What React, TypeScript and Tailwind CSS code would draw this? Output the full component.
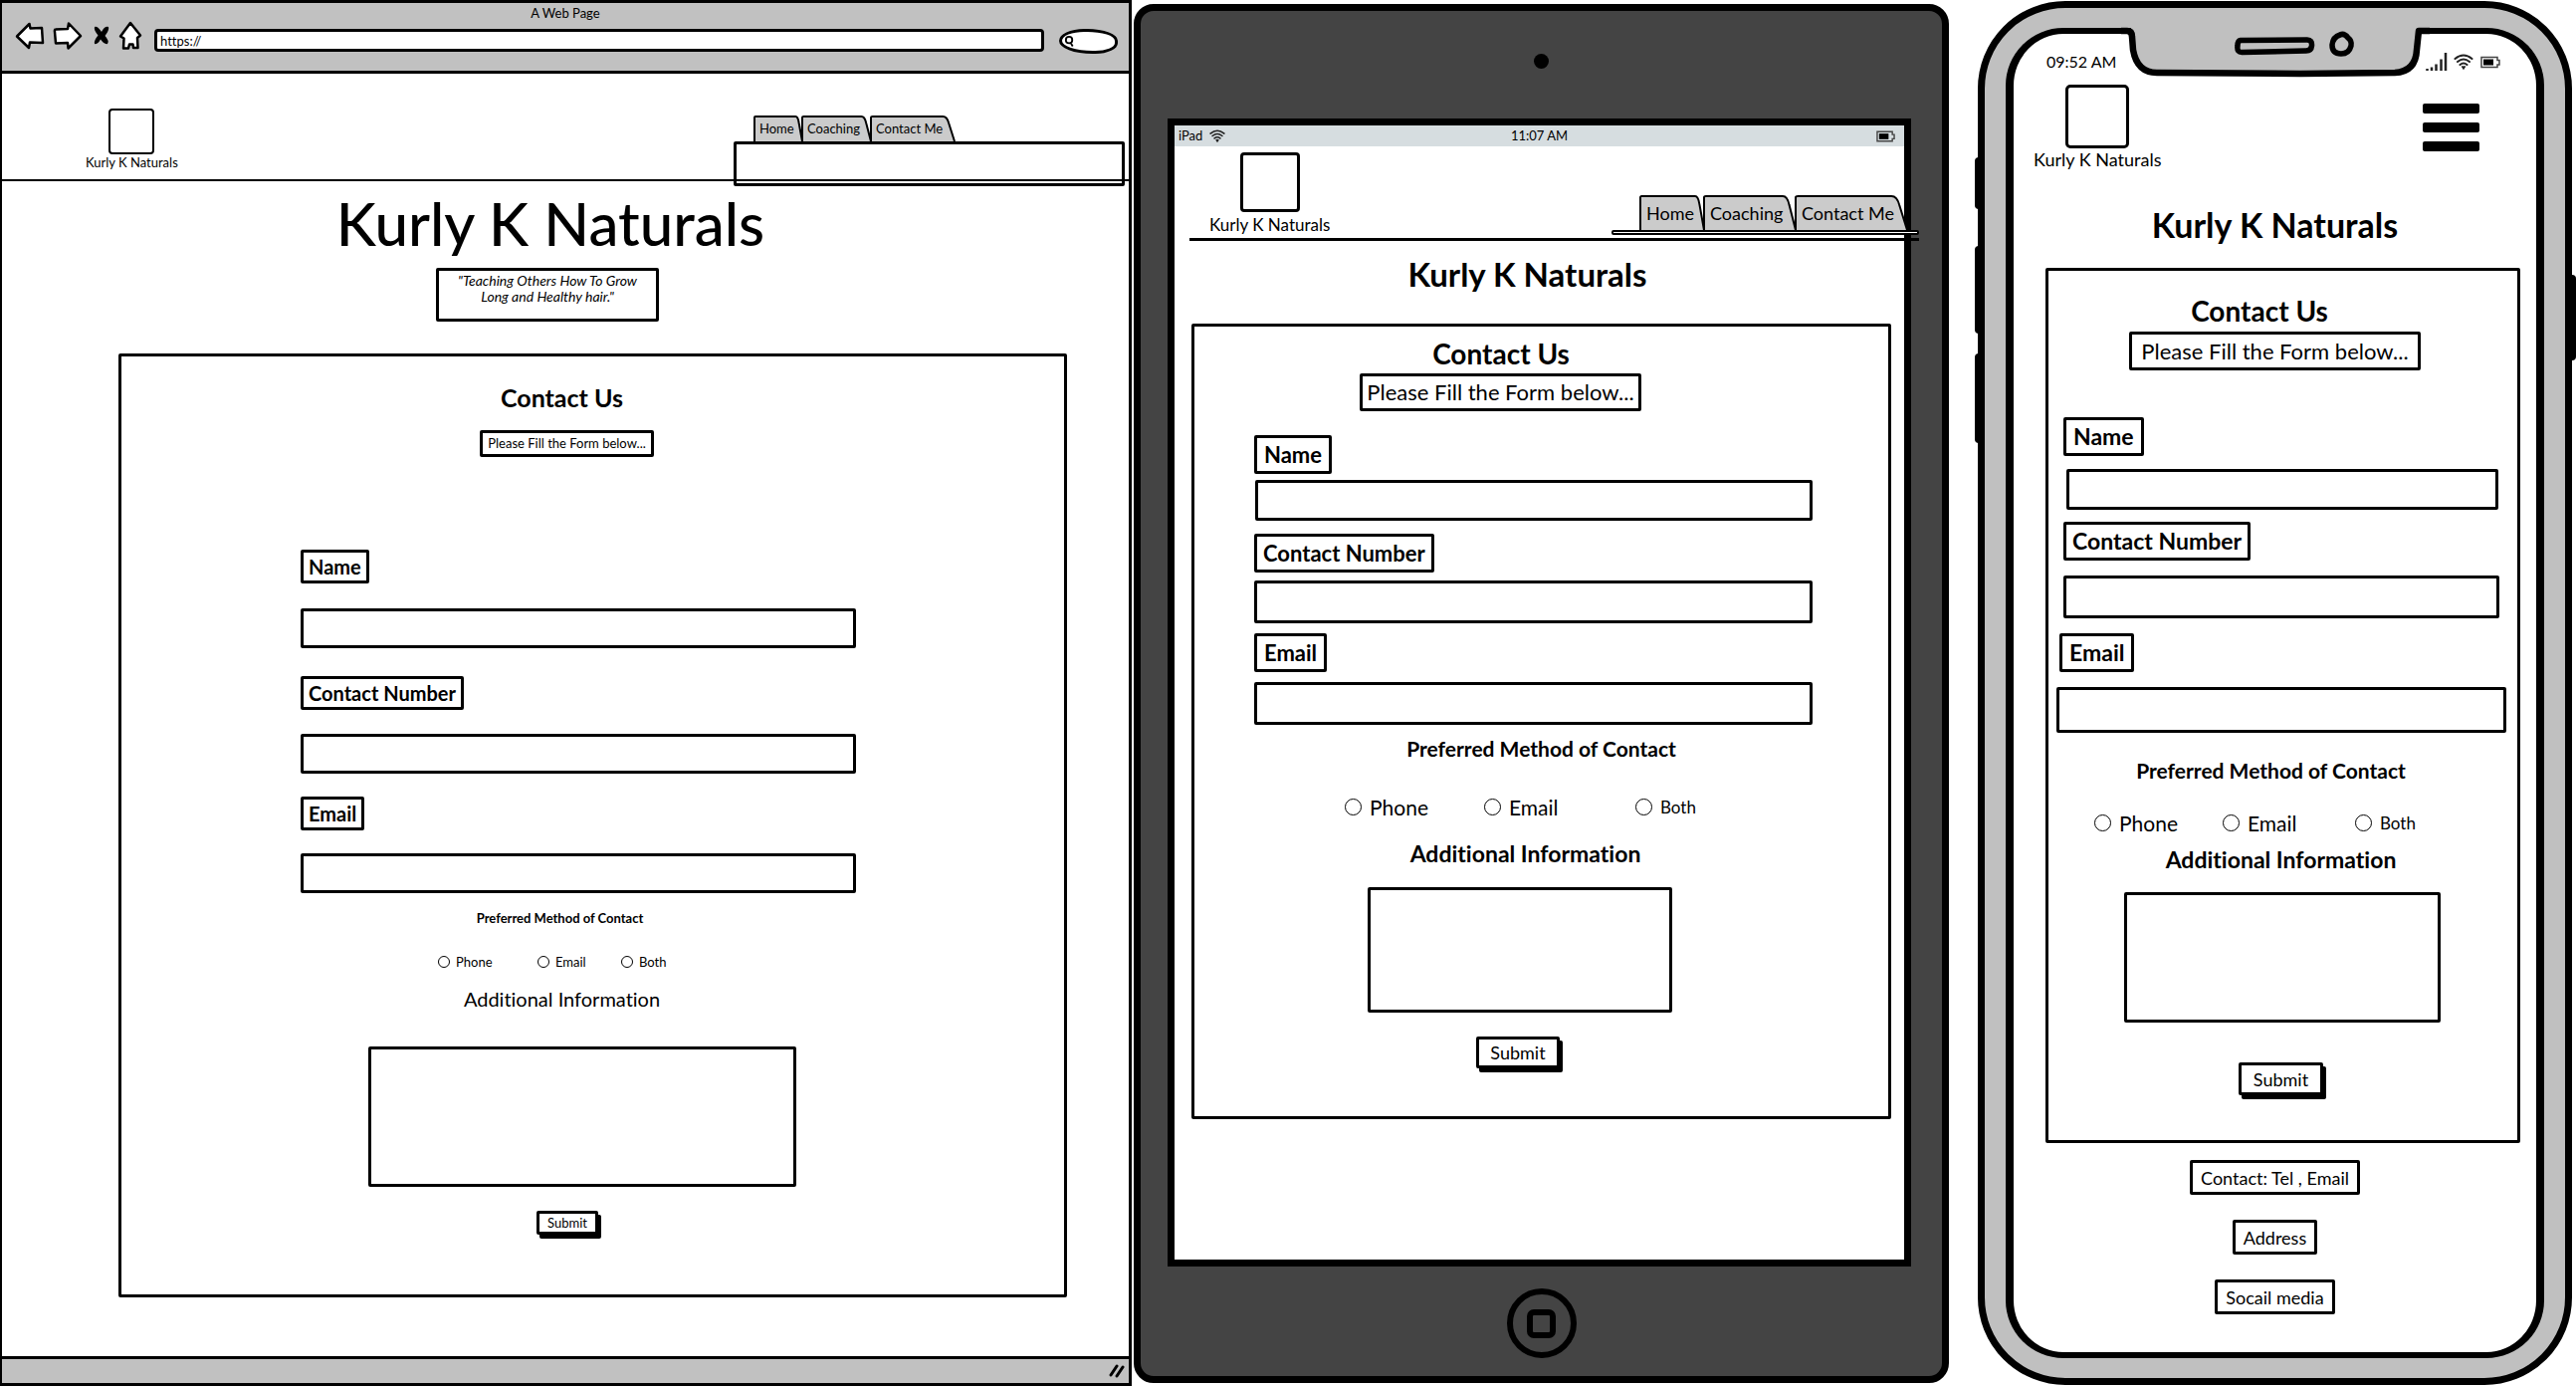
import type { ReactNode } from "react";

type FieldSpec = { label: string; type: string; labelBox: string; input: string };

type FormSpec = {
  id: string;
  card: string;
  heading: string;
  hint: string;
  fields: FieldSpec[];
  preferred: string;
  radios: string;
  options: { label: string; box: string; text: string }[];
  radio: string;
  additional: string;
  textarea: string;
  submit: string;
};

const desktopForm: FormSpec = {
  id: "desktop",
  card: "ml-[117px] mr-[62px] mt-[32px] border-[3px] pb-[60px]",
  heading: "mt-[29px] h-6 pr-[62px] text-[25px]",
  hint: "mt-[21px] mr-[52px] h-[27px] w-[175px] text-[13px]",
  fields: [
    {
      label: "Name",
      type: "text",
      labelBox: "mt-[93px] ml-[180px] h-[34px] px-[5px] text-[20px]",
      input: "mt-[25px] ml-[180px] mr-[209px] h-10",
    },
    {
      label: "Contact Number",
      type: "tel",
      labelBox: "mt-[28px] ml-[180px] h-[34px] px-[5px] text-[20px]",
      input: "mt-[24px] ml-[180px] mr-[209px] h-10",
    },
    {
      label: "Email",
      type: "email",
      labelBox: "mt-[23px] ml-[180px] h-[34px] px-[5px] text-[20px]",
      input: "mt-[23px] ml-[180px] mr-[209px] h-10",
    },
  ],
  preferred: "mt-[17px] h-4 pr-[66px] text-[13px]",
  radios: "mt-[28px] ml-[318px] h-4",
  options: [
    { label: "Phone", box: "w-[100px] gap-1.5", text: "text-[13px]" },
    { label: "Email", box: "w-[84px] gap-1.5", text: "text-[13px]" },
    { label: "Both", box: "gap-1.5", text: "text-[13px]" },
  ],
  radio: "size-3",
  additional: "mt-[17px] h-6 pr-[62px] text-[20px] font-normal",
  textarea: "mt-[36px] ml-[248px] mr-[269px] h-[141px]",
  submit: "mt-[24px] mr-[51px] h-6 px-2 text-[13px]",
};

const tabletForm: FormSpec = {
  id: "tablet",
  card: "ml-[17px] mr-[13px] mt-[34px] border-[3px] pb-[48px]",
  heading: "mt-[15px] h-6 pr-[81px] text-[28px]",
  hint: "mt-[8px] mr-[82px] h-[38px] w-[283px] text-[22px]",
  fields: [
    {
      label: "Name",
      type: "text",
      labelBox: "mt-[24px] ml-[60px] h-[39px] px-[7px] text-[22px]",
      input: "mt-[6px] ml-[61px] mr-[76px] h-[41px]",
    },
    {
      label: "Contact Number",
      type: "tel",
      labelBox: "mt-[13px] ml-[60px] h-[39px] px-[6px] text-[22px]",
      input: "mt-[8px] ml-[60px] mr-[76px] h-[43px]",
    },
    {
      label: "Email",
      type: "email",
      labelBox: "mt-[10px] ml-[60px] h-[39px] px-[7px] text-[22px]",
      input: "mt-[10px] ml-[60px] mr-[76px] h-[43px]",
    },
  ],
  preferred: "mt-[13px] h-5 text-[21px]",
  radios: "mt-[39px] ml-[151px] h-5",
  options: [
    { label: "Phone", box: "w-[140px] gap-2", text: "text-[21px]" },
    { label: "Email", box: "w-[152px] gap-2", text: "text-[21px]" },
    { label: "Both", box: "gap-2", text: "text-[17px]" },
  ],
  radio: "size-[17px]",
  additional: "mt-[25px] h-6 pr-[32px] text-[23px] font-bold",
  textarea: "mt-[22px] ml-[174px] mr-[217px] h-[126px]",
  submit: "mt-[24px] mr-[47px] h-8 px-[11px] text-[18px]",
};

const phoneForm: FormSpec = {
  id: "phone",
  card: "ml-[32px] mr-[16px] mt-[27px] border-[3px] pb-[45px]",
  heading: "mt-[28px] h-6 pr-[47px] text-[28px]",
  hint: "mt-[9px] mr-[16px] h-[39px] w-[293px] text-[22px]",
  fields: [
    {
      label: "Name",
      type: "text",
      labelBox: "mt-[47px] ml-[15px] h-[39px] px-[7px] text-[23px]",
      input: "mt-[13px] ml-[18px] mr-[19px] h-[41px]",
    },
    {
      label: "Contact Number",
      type: "tel",
      labelBox: "mt-[12px] ml-[15px] h-[39px] px-[6px] text-[23px]",
      input: "mt-[15px] ml-[15px] mr-[18px] h-[43px]",
    },
    {
      label: "Email",
      type: "email",
      labelBox: "mt-[15px] ml-[11px] h-[39px] px-[7px] text-[23px]",
      input: "mt-[15px] ml-[8px] mr-[11px] h-[46px]",
    },
  ],
  preferred: "mt-[27px] h-5 pr-[24px] text-[21px]",
  radios: "mt-[33px] ml-[46px] h-5",
  options: [
    { label: "Phone", box: "w-[129px] gap-2", text: "text-[21px]" },
    { label: "Email", box: "w-[133px] gap-2", text: "text-[21px]" },
    { label: "Both", box: "gap-2", text: "text-[17px]" },
  ],
  radio: "size-[17px]",
  additional: "mt-[15px] h-6 pr-[4px] text-[23px] font-bold",
  textarea: "mt-[21px] ml-[76px] mr-[77px] h-[131px]",
  submit: "mt-[40px] mr-[4px] h-[33px] px-[12px] text-[18px]",
};

function ContactForm({ spec }: { spec: FormSpec }) {
  return (
    <form
      onSubmit={(e) => e.preventDefault()}
      className={`flex flex-col rounded-[2px] border-black ${spec.card}`}
    >
      <h2 className={`text-center leading-6 font-bold ${spec.heading}`}>Contact Us</h2>
      <p
        className={`flex items-center justify-center self-center rounded-[2px] border-[3px] border-black leading-none whitespace-nowrap ${spec.hint}`}
      >
        Please Fill the Form below...
      </p>
      {spec.fields.map((f) => {
        const id = `${spec.id}-${f.type}`;
        return (
          <div key={id} className="flex flex-col">
            <label
              htmlFor={id}
              className={`flex items-center self-start rounded-[2px] border-[3px] border-black leading-none font-bold whitespace-nowrap ${f.labelBox}`}
            >
              {f.label}
            </label>
            <input id={id} type={f.type} className={`rounded-[2px] border-[3px] border-black px-2 ${f.input}`} />
          </div>
        );
      })}
      <fieldset className="flex flex-col">
        <legend className="contents">
          <span className={`flex items-center justify-center leading-none font-bold ${spec.preferred}`}>
            Preferred Method of Contact
          </span>
        </legend>
        <div className={`flex ${spec.radios}`}>
          {spec.options.map((o) => (
            <label key={o.label} className={`flex items-center leading-none ${o.box}`}>
              <input
                type="radio"
                name={`${spec.id}-method`}
                className={`shrink-0 appearance-none rounded-full border border-black checked:bg-black ${spec.radio}`}
              />
              <span className={o.text}>{o.label}</span>
            </label>
          ))}
        </div>
      </fieldset>
      <label htmlFor={`${spec.id}-info`} className={`text-center leading-6 ${spec.additional}`}>
        Additional Information
      </label>
      <textarea
        id={`${spec.id}-info`}
        className={`resize-none rounded-[2px] border-[3px] border-black p-2 ${spec.textarea}`}
      />
      <button
        type="submit"
        className={`flex items-center self-center rounded-[2px] border-[3px] border-black bg-white leading-none shadow-[3px_4px_0_0_#000] ${spec.submit}`}
      >
        Submit
      </button>
    </form>
  );
}

function Tab({ children, className }: { children: ReactNode; className: string }) {
  return (
    <a href="#" className={`relative flex items-center leading-none whitespace-nowrap ${className}`}>
      <svg
        className="absolute inset-0 h-full w-full overflow-visible"
        viewBox="0 0 100 100"
        preserveAspectRatio="none"
        aria-hidden="true"
      >
        <path
          d="M0 100V4Q0 0 2 0H86Q91 0 93 26L100 100"
          fill="#cbcbcb"
          stroke="#000"
          strokeWidth="2"
          vectorEffect="non-scaling-stroke"
        />
      </svg>
      <span className="relative">{children}</span>
    </a>
  );
}

function BackIcon() {
  return (
    <svg viewBox="0 0 30 30" className="h-[30px] w-[30px]" fill="#fff" stroke="#000" strokeWidth="2.5" strokeLinejoin="round">
      <path d="M2 15.5 14.5 3 15.5 7.5 27 7 28 22 15 21.5 14 27Z" />
    </svg>
  );
}

function ForwardIcon() {
  return (
    <svg viewBox="0 0 30 30" className="h-[30px] w-[30px]" fill="#fff" stroke="#000" strokeWidth="2.5" strokeLinejoin="round">
      <path d="M28 15 16 2.500 15 8 3 8.500Q1.500 8.500 2 11L3 22.500 15 22 15.500 27.500Z" />
    </svg>
  );
}

function StopIcon() {
  return (
    <svg viewBox="0 0 18 22" className="h-[22px] w-[18px]" aria-hidden="true">
      <path d="M2 2Q5 1 9 7Q12 1 16 2Q17 5 12.500 11Q17 16 15 19Q12 20 8 14.500Q5 20 2 19Q1 16 5.500 10.500Q1 5 2 2Z" />
    </svg>
  );
}

function HomeIcon() {
  return (
    <svg viewBox="0 0 24 30" className="h-[30px] w-6" fill="#fff" stroke="#000" strokeWidth="2.5" strokeLinejoin="round">
      <path d="M12 2 22 14.500 19 17 19.500 27H15L14.500 23.500 11 23.500 10 27.500H5L5.500 17.500 2 15.500Z" />
    </svg>
  );
}

function WifiIcon({ className }: { className: string }) {
  return (
    <svg viewBox="0 0 20 16" className={className} fill="none" stroke="#222" strokeWidth="2" strokeLinecap="round">
      <path d="M1.500 5Q10-2 18.500 5M4 8Q10 3 16 8M6.500 11Q10 8 13.500 11" />
      <path d="M9 13 10 14.500 11 13" />
    </svg>
  );
}

function BatteryIcon({ className }: { className: string }) {
  return (
    <svg viewBox="0 0 20 12" className={className} aria-hidden="true">
      <path d="M1 1H17V4H19V8.500H17V11H1Z" fill="none" stroke="#444" strokeWidth="1.5" />
      <path d="M3 3H13V9H3Z" fill="#000" />
    </svg>
  );
}

function SignalIcon() {
  return (
    <svg viewBox="0 0 22 18" className="h-[18px] w-[22px]" stroke="#222" strokeWidth="2.5" aria-hidden="true">
      <path d="M1.500 18V16M6 18V14.500M10.500 18V11.500M15.500 18V6.500M20 18V0" />
    </svg>
  );
}

function DesktopFrame() {
  return (
    <section className="flex flex-col border-[3px] border-l-2 border-black bg-white">
      <header className="flex h-[71px] flex-col border-b-[3px] border-black bg-[#c1c1c1]">
        <p className="mt-0.5 text-center text-[13px] leading-4">A Web Page</p>
        <div className="flex items-start pr-[11px] pl-[13px]">
          <button type="button" aria-label="Back"><BackIcon /></button>
          <button type="button" aria-label="Forward" className="ml-2"><ForwardIcon /></button>
          <button type="button" aria-label="Stop" className="mt-1 ml-2.5"><StopIcon /></button>
          <button type="button" aria-label="Home" className="ml-2"><HomeIcon /></button>
          <input
            type="text"
            aria-label="Address"
            defaultValue="https://"
            className="mt-2 ml-3 h-[23px] min-w-0 flex-1 rounded-[4px] border-[3px] border-black bg-white pl-[3px] text-[13px] leading-none"
          />
          <label className="mt-2 ml-[15px] flex h-[25px] w-[59px] items-center rounded-[45%_55%_40%_60%/50%_50%_45%_55%] border-[3px] border-black bg-white pl-0.5">
            <svg viewBox="0 0 12 14" className="h-[13px] w-[11px] shrink-0" fill="none" stroke="#000" strokeWidth="2">
              <path d="M5.500 2Q9 2 9 5.500T5.500 9Q2 9 2 5.500T5.500 2ZM7.500 9 9.500 12.500" />
            </svg>
            <input type="search" aria-label="Search" className="min-w-0 flex-1 bg-transparent outline-none" />
          </label>
        </div>
      </header>

      <main className="flex flex-1 flex-col">
        <div className="flex h-[108px] items-start justify-between border-b-2 border-black pr-[4px] pl-[84px]">
          <div className="mt-[35px] flex flex-col items-center">
            <div className="h-[46px] w-[46px] rounded-[4px] border-2 border-black" />
            <p className="text-[13px] leading-4">Kurly K Naturals</p>
          </div>
          <div className="mt-[43px] flex w-[393px] flex-col">
            <nav className="flex h-[25px] pl-[21px] text-[13px]">
              <Tab className="w-[48px] pl-[5px]">Home</Tab>
              <Tab className="w-[69px] pl-[5px]">Coaching</Tab>
              <Tab className="w-[84px] pl-[5px]">Contact Me</Tab>
            </nav>
            <div className="h-[45px] rounded-[2px] border-[3px] border-black" />
          </div>
        </div>

        <h1 className="mt-2.5 pr-[30px] text-center text-[60px] leading-[64px] font-medium">Kurly K Naturals</h1>
        <p className="mt-[13px] mr-[36px] h-[54px] w-[224px] self-center rounded-[2px] border-[3px] border-black px-3 pt-0.5 text-center text-[14px] leading-4 italic">
          "Teaching Others How To Grow Long and Healthy hair."
        </p>
        <ContactForm spec={desktopForm} />
      </main>

      <footer className="flex h-[27px] items-center justify-end border-t-[3px] border-black bg-[#c1c1c1] pr-1">
        <svg viewBox="0 0 16 14" className="h-[14px] w-4" stroke="#000" strokeWidth="3" strokeLinecap="round">
          <path d="M2 11 8 2M8 12 14 3" />
        </svg>
      </footer>
    </section>
  );
}

function TabletFrame() {
  return (
    <section className="mt-[4px] mr-[1px] mb-[3px] ml-[2px] flex flex-col rounded-[20px] border-[7px] border-black bg-[#444] pr-[31px] pl-[27px]">
      <div className="flex h-[108px] items-start justify-center pt-[43px] pl-[4px]">
        <div className="size-[15px] rounded-full bg-black" />
      </div>
      <div className="flex flex-1 flex-col border-[7px] border-black bg-white">
        <div className="grid h-[21px] grid-cols-3 items-center bg-[#d6dde0] px-1 text-[13px] leading-none">
          <div className="flex items-center gap-1.5">
            <span>iPad</span>
            <WifiIcon className="h-[13px] w-[18px]" />
          </div>
          <span className="text-center">11:07 AM</span>
          <BatteryIcon className="mr-[5px] h-3 w-[19px] justify-self-end" />
        </div>
        <div className="mr-[-15px] ml-[15px] flex h-[95px] items-start justify-between border-b-[3px] border-black">
          <div className="mt-[6px] ml-[20px] flex flex-col items-center">
            <div className="h-[60px] w-[60px] rounded-[4px] border-[3px] border-black" />
            <p className="mt-[3px] text-[17px] leading-5">Kurly K Naturals</p>
          </div>
          <div className="mt-[50px] flex w-[309px] flex-col">
            <nav className="flex h-[34px] pl-[29px] text-[18px]">
              <Tab className="w-[64px] pl-[6px]">Home</Tab>
              <Tab className="w-[92px] pl-[6px]">Coaching</Tab>
              <Tab className="w-[112px] pl-[6px]">Contact Me</Tab>
            </nav>
            <div className="h-[5px] rounded-[2px] border-2 border-black bg-white" />
          </div>
        </div>
        <h1 className="mt-[17px] pr-[24px] text-center text-[33px] leading-8 font-bold">Kurly K Naturals</h1>
        <ContactForm spec={tabletForm} />
      </div>
      <div className="flex h-[110px] items-center justify-center pt-1 pl-[4px]">
        <button
          type="button"
          aria-label="Home button"
          className="flex size-[70px] items-center justify-center rounded-full border-[6px] border-black"
        >
          <span className="size-[29px] rounded-[7px] border-[6px] border-black" />
        </button>
      </div>
    </section>
  );
}

function PhoneFrame() {
  return (
    <section className="relative mt-[1px] mr-[4px] mb-[1px] ml-[28px] flex flex-col rounded-[88px] border-[7px] border-black bg-[#c0c0c0] px-[21px] pt-[20px] pb-[20px]">
      <span className="absolute top-[150px] -left-[10px] h-[52px] w-1 rounded-l-[4px] bg-black" />
      <span className="absolute top-[239px] -left-[10px] h-[88px] w-1 rounded-l-[4px] bg-black" />
      <span className="absolute top-[347px] -left-[10px] h-[90px] w-1 rounded-l-[4px] bg-black" />
      <span className="absolute top-[268px] -right-[11px] h-[86px] w-[5px] rounded-r-[4px] bg-black" />

      <div className="relative flex flex-1 flex-col rounded-[58px] border-[8px] border-t-[6px] border-b-[6px] border-black bg-white">
        <svg
          viewBox="0 0 310 54"
          className="absolute -top-[8px] left-1/2 h-[54px] w-[310px] -translate-x-1/2"
          fill="none"
          strokeLinejoin="round"
          aria-hidden="true"
        >
          <path d="M10 0V10L13 26Q17 47 35 47L180 48 275 47Q296 46 297 24L299 0Z" fill="#c0c0c0" />
          <g stroke="#000">
            <path d="M0 5H6Q11 5 11 11L12 24Q16 47 36 47L180 48 275 47Q296 46 297 24L299 5H310" strokeWidth="6.5" />
            <path d="M120 14.500 187 14Q192 14 191.500 20 191 25 186 25L122 26.500Q116 27 117 20 117 15 120 14.500Z" strokeWidth="5.5" />
            <path d="M220 9Q224 7 228 12 232 15 231 20 229 28 221 28 212 28 212 19 213 11 220 9Z" strokeWidth="5.5" />
          </g>
        </svg>
        <div className="flex items-center pt-4 pr-[36px] pl-[33px]">
          <span className="flex-1 text-[16px] leading-6">09:52 AM</span>
          <SignalIcon />
          <WifiIcon className="ml-1.5 h-4 w-5" />
          <BatteryIcon className="ml-[7px] h-[13px] w-5" />
        </div>
        <header className="flex items-start justify-between pr-[57px] pl-[20px]">
          <div className="mt-[11px] flex flex-col items-center">
            <div className="h-[64px] w-[64px] rounded-[5px] border-[3px] border-black" />
            <p className="mt-px text-[18px] leading-5">Kurly K Naturals</p>
          </div>
          <button type="button" aria-label="Menu" className="mt-[30px] flex w-[57px] flex-col gap-[9px]">
            <span className="h-[10px] rounded-[2px] bg-black" />
            <span className="h-[10px] rounded-[2px] bg-black" />
            <span className="h-[10px] rounded-[2px] bg-black" />
          </button>
        </header>
        <h1 className="mt-[40px] text-center text-[34px] leading-8 font-bold">Kurly K Naturals</h1>
        <ContactForm spec={phoneForm} />
        <footer className="mt-[17px] flex flex-col items-center gap-[25px] text-[18px] leading-none">
          <p className="flex h-[35px] items-center rounded-[2px] border-[3px] border-black px-[8px]">Contact: Tel , Email</p>
          <p className="flex h-[35px] items-center rounded-[2px] border-[3px] border-black px-[8px]">Address</p>
          <p className="flex h-[35px] items-center rounded-[2px] border-[3px] border-black px-[8px]">Socail media</p>
        </footer>
      </div>
    </section>
  );
}

export default function App() {
  return (
    <div className="grid min-h-screen grid-cols-[1137fr_822fr_629fr] bg-white font-['Lato',sans-serif] text-black [font-variant-ligatures:none]">
      <DesktopFrame />
      <TabletFrame />
      <PhoneFrame />
    </div>
  );
}
